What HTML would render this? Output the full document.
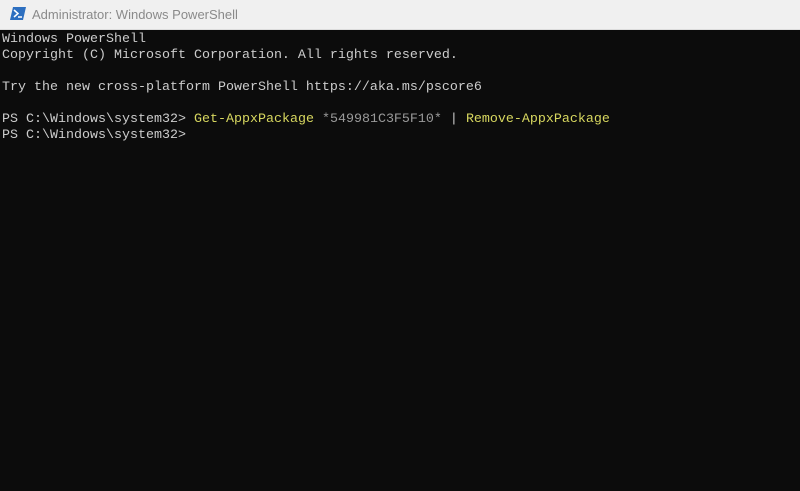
<!DOCTYPE html>
<html><head><style>
html,body{margin:0;padding:0;width:800px;height:491px;overflow:hidden;background:#0c0c0c;}
.title{position:absolute;left:0;top:0;width:800px;height:29px;background:#f0f0f0;border-bottom:1px solid #dcdcdc;}
.title span{position:absolute;left:32px;top:7px;font:13px "Liberation Sans",sans-serif;color:#8a8a8a;}
.icon{position:absolute;left:10px;top:7px;width:16px;height:13px;}
pre{position:absolute;left:2px;top:32px;margin:0;font:13.33px/16px "Liberation Mono",monospace;color:#cccccc;}
.y{color:#d7d75f;}
.g{color:#9a9a9a;}
</style></head><body>
<div class="title">
<svg class="icon" viewBox="0 0 16 13"><polygon points="3,0 16,0 13,13 0,13" fill="#2d6fc0"/><path d="M4 3 L8 6.5 L4 10" stroke="#fff" stroke-width="1.5" fill="none"/><path d="M8 10 H12" stroke="#fff" stroke-width="1.5"/></svg>
<span>Administrator: Windows PowerShell</span>
</div>
<pre>Windows PowerShell
Copyright (C) Microsoft Corporation. All rights reserved.

Try the new cross-platform PowerShell https://aka.ms/pscore6

PS C:\Windows\system32&gt; <span class="y">Get-AppxPackage</span> <span class="g">*549981C3F5F10*</span> | <span class="y">Remove-AppxPackage</span>
PS C:\Windows\system32&gt;</pre>
</body></html>
